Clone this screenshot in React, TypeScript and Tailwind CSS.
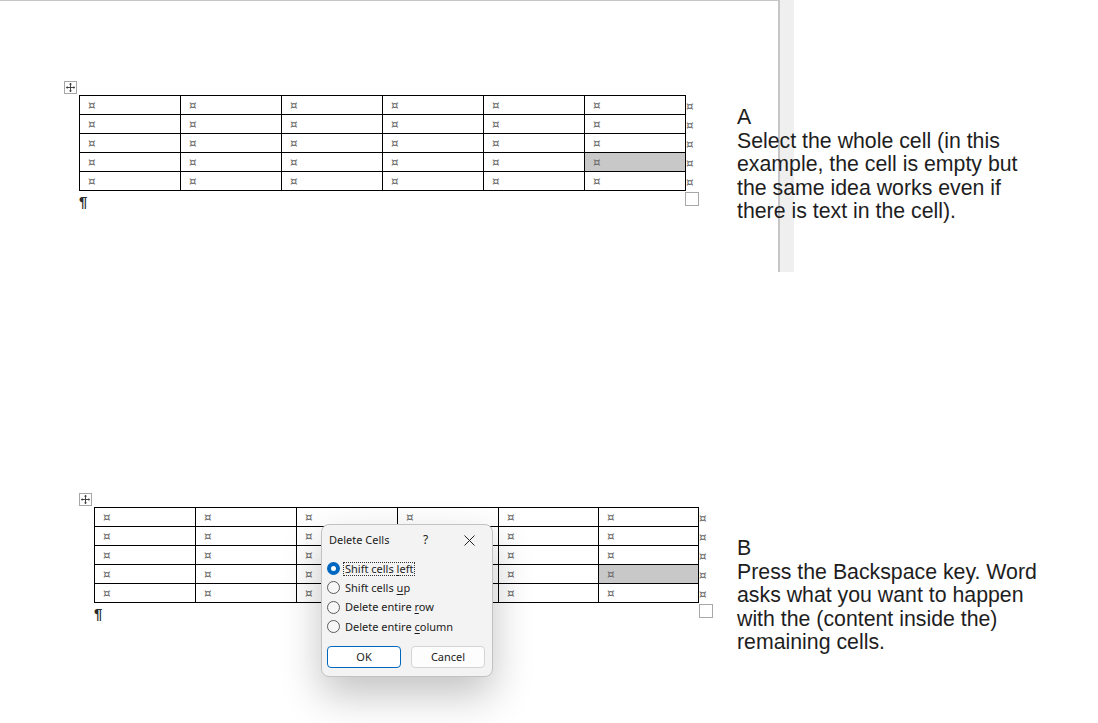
import React from 'react';

type TableSpec = {
  cols: string[];
  shadeRow: number;
  shadeCol: number;
  footWidth: string;
};

const ROWS = [0, 1, 2, 3, 4];

const tableA: TableSpec = {
  cols: ['w-[101px]', 'w-[101px]', 'w-[101px]', 'w-[101px]', 'w-[101px]', 'w-[101px]'],
  shadeRow: 3,
  shadeCol: 5,
  footWidth: 'w-[620px]',
};

const tableB: TableSpec = {
  cols: ['w-[101px]', 'w-[101px]', 'w-[101px]', 'w-[101px]', 'w-[100px]', 'w-[100px]'],
  shadeRow: 3,
  shadeCol: 5,
  footWidth: 'w-[619px]',
};

const CellMark = () => (
  <span className="font-['DejaVu_Sans',sans-serif] text-[12px] leading-none text-[#6a6a6a]">¤</span>
);

const MoveHandle = () => (
  <svg width="13" height="13" viewBox="0 0 13 13" className="block">
    <rect x="0.5" y="0.5" width="12" height="12" fill="#fff" stroke="#a6a6a6" />
    <path d="M6.5 2.5v8M2.5 6.5h8" stroke="#444" strokeWidth="1" />
    <path d="M6.5 1.8l-1.6 1.7h3.2zM6.5 11.2l-1.6-1.7h3.2zM1.8 6.5l1.7-1.6v3.2zM11.2 6.5l-1.7-1.6v3.2z" fill="#444" />
  </svg>
);

/** Word table in "show formatting" mode: cell markers, row-end markers, handles. */
const WordTable: React.FC<{ spec: TableSpec }> = ({ spec }) => (
  <div className="flex flex-col">
    <div className="h-[14px]">
      <MoveHandle />
    </div>
    <div className="ml-[15px] flex">
      <div className="border-l border-t border-black">
        {ROWS.map((r) => (
          <div key={r} className="flex">
            {spec.cols.map((w, c) => (
              <div
                key={c}
                className={`${w} flex h-[19px] items-center border-b border-r border-black pl-[8px] ${
                  r === spec.shadeRow && c === spec.shadeCol ? 'bg-[#c8c8c8]' : 'bg-white'
                }`}
              >
                <CellMark />
              </div>
            ))}
          </div>
        ))}
      </div>
      <div className="flex flex-col pt-[1px]">
        {ROWS.map((r) => (
          <div key={r} className="flex h-[19px] items-center">
            <CellMark />
          </div>
        ))}
      </div>
    </div>
    <div className={`ml-[15px] flex items-start justify-between ${spec.footWidth}`}>
      <span className="pt-[3px] font-['Liberation_Sans',Arial,sans-serif] text-[15px] leading-[15px] font-bold text-[#2a2a2a]">
        ¶
      </span>
      <div className="mt-[1px] h-[14px] w-[14px] border border-[#a8a8a8] bg-white" />
    </div>
  </div>
);

const Radio = ({ checked }: { checked?: boolean }) =>
  checked ? (
    <span className="flex h-[13px] w-[13px] items-center justify-center rounded-full bg-[#0067c0]">
      <span className="h-[5px] w-[5px] rounded-full bg-white" />
    </span>
  ) : (
    <span className="h-[13px] w-[13px] rounded-full border border-[#5c5c5c] bg-[#f7f7f7]" />
  );

const options = [
  { pre: 'Shift cells ', key: 'l', post: 'eft', checked: true },
  { pre: 'Shift cells ', key: 'u', post: 'p' },
  { pre: 'Delete entire ', key: 'r', post: 'ow' },
  { pre: 'Delete entire ', key: 'c', post: 'olumn' },
];

const DeleteCellsDialog = () => (
  <div className="absolute left-[321px] top-[524px] h-[153px] w-[172px] rounded-[8px] border border-[#c2c2c2] bg-[#f3f3f3] font-['Noto_Sans','Open_Sans',sans-serif] text-[11px] text-[#1b1b1b] shadow-[0_18px_40px_rgba(0,0,0,0.24)]">
    <div className="flex h-[30px] items-center pl-[7px]">
      <span className="w-[94px]">Delete Cells</span>
      <span className="w-[41px] text-[12px]">?</span>
      <svg width="11" height="11" viewBox="0 0 11 11">
        <path d="M0.5 0.5l10 10M10.5 0.5l-10 10" stroke="#222" strokeWidth="1" />
      </svg>
    </div>
    <div className="mt-[4px] flex flex-col pl-[5px]">
      {options.map((o) => (
        <div key={o.post} className="flex h-[19.3px] items-center gap-[3px]">
          <Radio checked={o.checked} />
          <span
            className={`px-[1px] leading-[12px] ${
              o.checked ? 'border border-dotted border-[#333]' : 'border border-transparent'
            }`}
          >
            {o.pre}
            <span className="underline underline-offset-2">{o.key}</span>
            {o.post}
          </span>
        </div>
      ))}
    </div>
    <div className="mt-[10px] flex gap-[10px] pl-[5px]">
      <button
        type="button"
        className="flex h-[22px] w-[74px] items-center justify-center rounded-[4px] border border-[#0067c0] bg-white text-[11px]"
      >
        OK
      </button>
      <button
        type="button"
        className="flex h-[22px] w-[74px] items-center justify-center rounded-[4px] border border-[#d4d4d4] bg-[#fdfdfd] text-[11px]"
      >
        Cancel
      </button>
    </div>
  </div>
);

const Note = ({ lines }: { lines: string[] }) => (
  <div className="font-['Liberation_Sans',Arial,sans-serif] text-[21.3px] leading-[23.6px] text-[#1e1e1e]">
    {lines.map((l) => (
      <div key={l} className="whitespace-nowrap">
        {l}
      </div>
    ))}
  </div>
);

export default function App() {
  return (
    <div className="relative h-[723px] w-[1098px] overflow-hidden bg-white">
      {/* page edge and gutter of the top document */}
      <div className="absolute left-0 top-0 h-[272px] w-[780px] border-r-2 border-t border-[#c6c6c6]" />
      <div className="absolute left-[780px] top-0 h-[272px] w-[14px] bg-[#efefef]" />

      <div className="relative flex h-[493px] pl-[64px] pt-[81px]">
        <div className="w-[673px]">
          <WordTable spec={tableA} />
        </div>
        <div className="mt-[25px]">
          <Note
            lines={[
              'A',
              'Select the whole cell (in this',
              'example, the cell is empty but',
              'the same idea works even if',
              'there is text in the cell).',
            ]}
          />
        </div>
      </div>

      <div className="relative flex pl-[79px]">
        <div className="w-[658px]">
          <WordTable spec={tableB} />
        </div>
        <div className="mt-[44px]">
          <Note
            lines={[
              'B',
              'Press the Backspace key. Word',
              'asks what you want to happen',
              'with the (content inside the)',
              'remaining cells.',
            ]}
          />
        </div>
      </div>

      <DeleteCellsDialog />
    </div>
  );
}
